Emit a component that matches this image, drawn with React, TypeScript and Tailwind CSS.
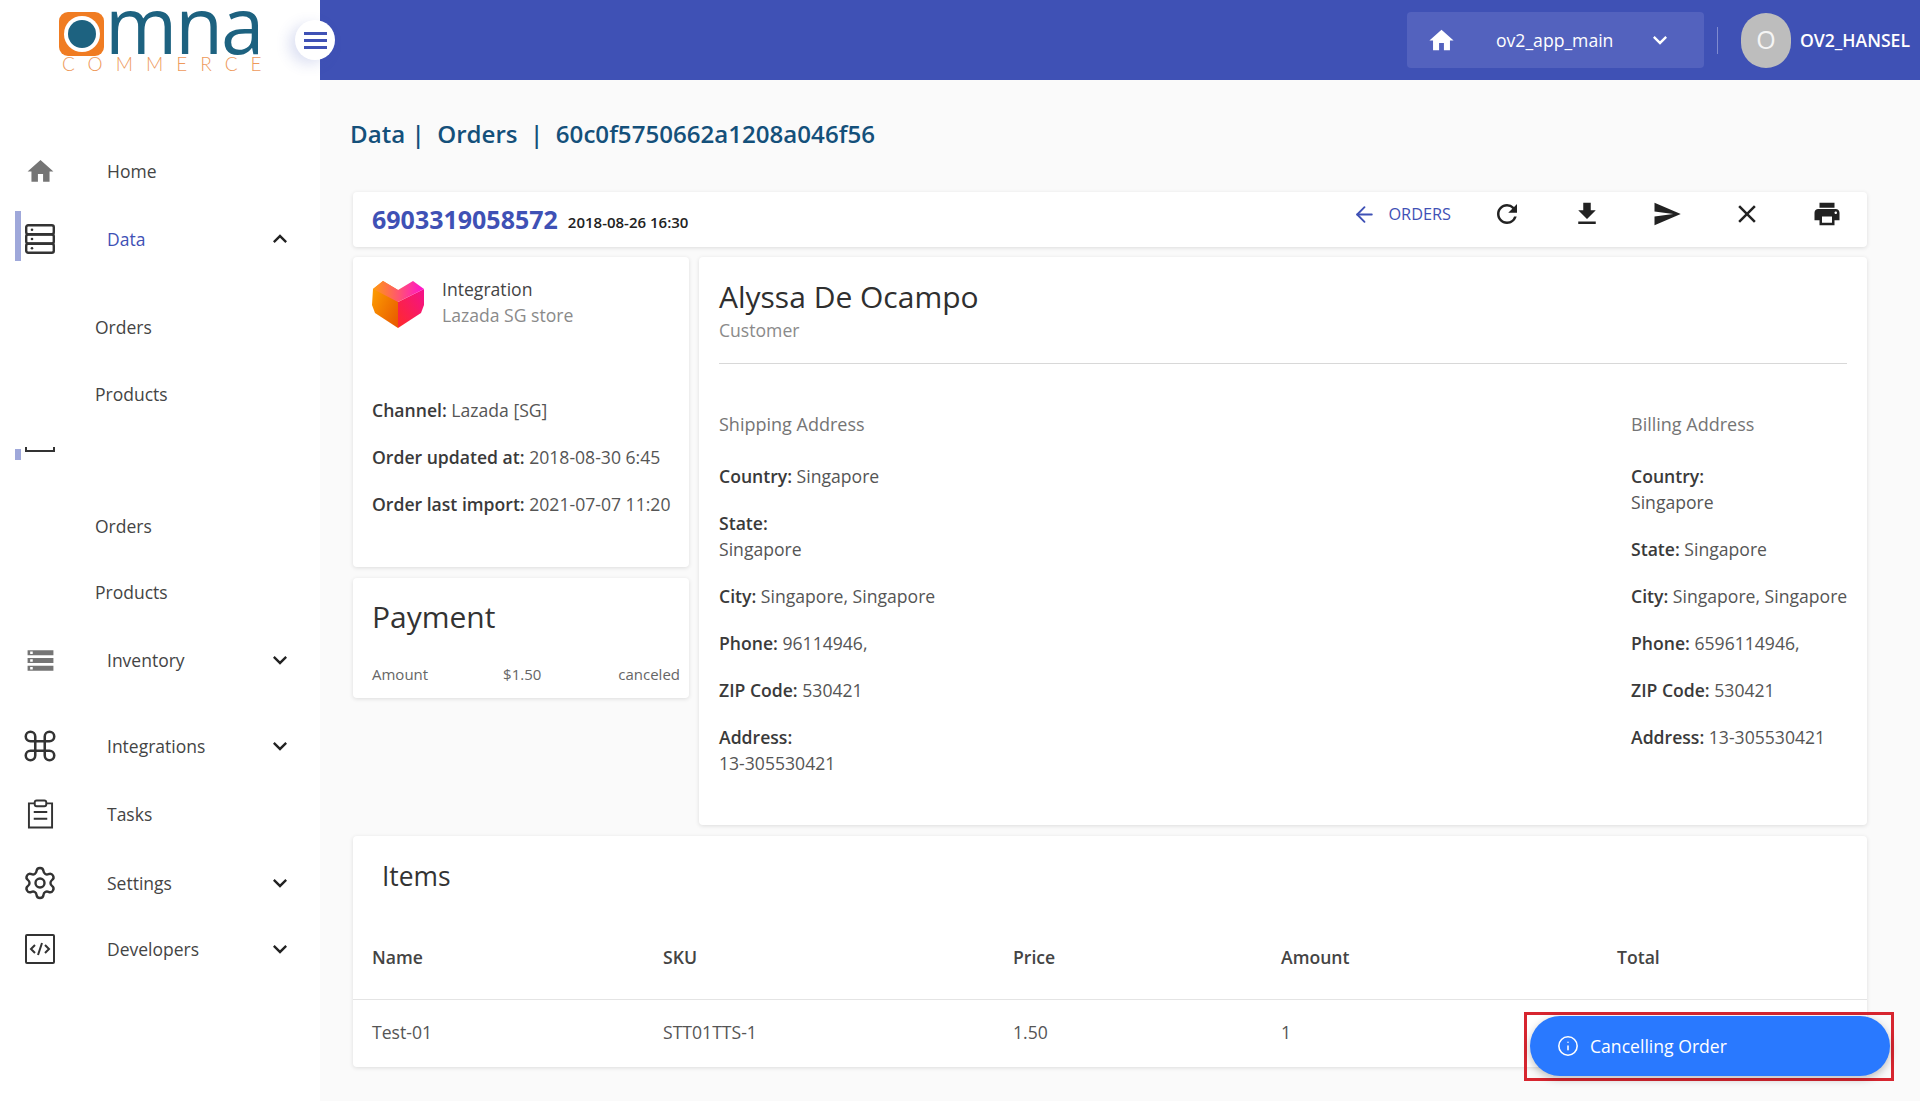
import React from "react";
import { MdHome, MdStorage, MdExpandMore, MdExpandLess, MdRefresh, MdFileDownload, MdSend, MdClose, MdPrint } from "react-icons/md";
import { ArrowLeft, Command, Settings, Info } from "lucide-react";

function ServerIcon({ className }: { className?: string }) {
  return (
    <svg viewBox="0 0 30 30" className={className} fill="none" stroke="#333" strokeWidth="2.4">
      <rect x="1.2" y="1.2" width="27.6" height="9" rx="2" />
      <rect x="1.2" y="10.5" width="27.6" height="9" rx="2" />
      <rect x="1.2" y="19.8" width="27.6" height="9" rx="2" />
      <circle cx="7" cy="5.7" r="1.3" fill="#333" stroke="none" />
      <circle cx="7" cy="15" r="1.3" fill="#333" stroke="none" />
      <circle cx="7" cy="24.3" r="1.3" fill="#333" stroke="none" />
    </svg>
  );
}

function TasksIcon({ className }: { className?: string }) {
  return (
    <svg viewBox="0 0 28 30" className={className} fill="none" stroke="#333" strokeWidth="2">
      <path d="M8 4H2v25h24V4h-6" />
      <rect x="8" y="1" width="12" height="6" rx="2" />
      <path d="M7 13h14M7 20h14" />
    </svg>
  );
}

function CodeIcon({ className }: { className?: string }) {
  return (
    <svg viewBox="0 0 30 30" className={className} fill="none" stroke="#333" strokeWidth="2">
      <rect x="1" y="1" width="28" height="28" rx="1" />
      <path d="M10 11l-4 4 4 4M20 11l4 4-4 4M17 9l-4 12" />
    </svg>
  );
}

function LazadaIcon() {
  return (
    <svg viewBox="0 0 52 48" className="w-[52px] h-[48px]">
      <defs>
        <linearGradient id="lz1" x1="0" y1="0" x2="1" y2="0.9">
          <stop offset="0" stopColor="#ffa400" />
          <stop offset="1" stopColor="#e85a00" />
        </linearGradient>
        <linearGradient id="lz2" x1="0" y1="0" x2="1" y2="0">
          <stop offset="0" stopColor="#ff9a10" />
          <stop offset="1" stopColor="#ff10d0" />
        </linearGradient>
        <linearGradient id="lz3" x1="0" y1="1" x2="1" y2="0">
          <stop offset="0" stopColor="#ff2a2a" />
          <stop offset="1" stopColor="#f4108c" />
        </linearGradient>
      </defs>
      <path d="M1 9L11 1l15 9v38L3 33 0 25z" fill="url(#lz1)" />
      <path d="M26 48l23-15 3-8V9L26 22z" fill="url(#lz3)" />
      <path d="M1 9l25 13L52 9 41 1 26 10 11 1z" fill="url(#lz2)" />
    </svg>
  );
}

function Logo() {
  return (
    <div className="w-[204px] flex flex-col">
      <div className="flex items-start h-[42px]">
        <div className="w-[45px] h-[44px] rounded-[9px] bg-[#f07c22] flex items-center justify-center shrink-0">
          <div className="w-[36px] h-[36px] rounded-full bg-white flex items-center justify-center">
            <div className="w-[28px] h-[28px] rounded-full bg-[#1d6280]" />
          </div>
        </div>
        <span className="text-[78px] leading-[40px] text-[#1d6280] tracking-[-2px] font-['Open_Sans',sans-serif] ml-[1px] -mt-[8px] font-normal whitespace-nowrap">
          mna
        </span>
      </div>
      <span className="ml-[3px] text-[19px] leading-[20px] text-[#ee9a5c] tracking-[13px] font-['Lato',sans-serif] font-light whitespace-nowrap">
        COMMERCE
      </span>
    </div>
  );
}

type NavProps = {
  icon?: React.ReactNode;
  label: string;
  chevron?: "up" | "down";
  active?: boolean;
  cls: string;
};

function NavRow({ icon, label, chevron, active, cls }: NavProps) {
  return (
    <div className={`relative flex items-center h-[40px] ${cls}`}>
      <div className="w-[80px] flex justify-center shrink-0">{icon}</div>
      <span className={`ml-[27px] text-[17.5px] flex-1 ${active ? "text-[#3f51b5]" : "text-[#444]"}`}>{label}</span>
      {chevron === "up" && <MdExpandLess className="w-[28px] h-[28px] text-[#222] mr-[26px]" />}
      {chevron === "down" && <MdExpandMore className="w-[28px] h-[28px] text-[#222] mr-[26px]" />}
    </div>
  );
}

function SubRow({ label, cls }: { label: string; cls: string }) {
  return <div className={`h-[40px] flex items-center pl-[95px] text-[17.5px] text-[#444] ${cls}`}>{label}</div>;
}

function Sidebar() {
  return (
    <aside className="relative w-[320px] shrink-0 bg-white h-full">
      <div className="pl-[59px] pt-[12px] h-[151px]">
        <Logo />
      </div>
      <button className="absolute left-[295px] top-[20px] w-[40px] h-[40px] rounded-full bg-white shadow-[-6px_4px_14px_rgba(63,81,181,0.18)] flex flex-col items-center justify-center gap-[4px] z-10">
        <span className="w-[23px] h-[3px] bg-[#3f51b5] block" />
        <span className="w-[23px] h-[3px] bg-[#3f51b5] block" />
        <span className="w-[23px] h-[3px] bg-[#3f51b5] block" />
      </button>
      <NavRow cls="" label="Home" icon={<MdHome className="w-[31px] h-[31px] text-[#757575]" />} />
      <div className="relative">
        <span className="absolute left-[15px] -top-[8px] w-[6px] h-[50px] bg-[#9fa8da]" />
        <NavRow cls="mt-[28px]" label="Data" active chevron="up" icon={<ServerIcon className="w-[30px] h-[30px]" />} />
      </div>
      <SubRow cls="mt-[48px]" label="Orders" />
      <SubRow cls="mt-[27px]" label="Products" />
      <div className="relative h-[12px] mt-[35px] mb-[-12px]">
        <span className="absolute left-[15px] top-[0px] w-[6px] h-[11px] bg-[#9fa8da]" />
        <span className="absolute left-[25px] top-[-2px] w-[30px] h-[5px] border-x-2 border-b-2 border-[#333]" />
      </div>
      <SubRow cls="mt-[57px]" label="Orders" />
      <SubRow cls="mt-[26px]" label="Products" />
      <NavRow cls="mt-[28px]" label="Inventory" chevron="down" icon={<MdStorage className="w-[31px] h-[31px] text-[#757575]" />} />
      <NavRow cls="mt-[46px]" label="Integrations" chevron="down" icon={<Command className="w-[38px] h-[38px] text-[#333]" strokeWidth={1.6} />} />
      <NavRow cls="mt-[28px]" label="Tasks" icon={<TasksIcon className="w-[27px] h-[30px]" />} />
      <NavRow cls="mt-[29px]" label="Settings" chevron="down" icon={<Settings className="w-[36px] h-[36px] text-[#333]" strokeWidth={1.6} />} />
      <NavRow cls="mt-[26px]" label="Developers" chevron="down" icon={<CodeIcon className="w-[30px] h-[30px]" />} />
    </aside>
  );
}

function Topbar() {
  return (
    <header className="h-[80px] bg-[#3f51b5] flex items-center justify-end shrink-0">
      <div className="w-[297px] h-[56px] rounded-[4px] bg-[#5362be] flex items-center text-white">
        <MdHome className="w-[29px] h-[29px] ml-[20px]" />
        <span className="ml-[40px] text-[17.6px] flex-1">ov2_app_main</span>
        <MdExpandMore className="w-[28px] h-[28px] mr-[30px]" />
      </div>
      <div className="w-px h-[27px] bg-[#7f8bd0] ml-[13px]" />
      <div className="ml-[23px] w-[50px] h-[55px] rounded-full bg-[#bdbdbd] text-[#f5f5f5] flex items-center justify-center text-[25px]">O</div>
      <span className="ml-[9px] mr-[10px] text-[17.6px] font-semibold text-white whitespace-nowrap">OV2_HANSEL</span>
    </header>
  );
}

function Field({ k, v, stack }: { k: string; v: string; stack?: boolean }) {
  return (
    <div className="text-[17.6px] leading-[26px] text-[#555] mt-[21px] whitespace-nowrap">
      <span className="font-semibold text-[#3a3a3a]">{k}</span>
      {stack ? <br /> : " "}
      {v}
    </div>
  );
}

const card = "bg-white rounded-[4px] shadow-[0_1px_4px_rgba(0,0,0,0.12)]";

function Toolbar() {
  const iconCls = "w-[30px] h-[30px] text-[#222]";
  return (
    <div className={`${card} h-[55px] flex items-center pl-[19px] pr-[25px]`}>
      <span className="text-[25px] font-bold text-[#3f51b5] leading-none -mt-[1px]">6903319058572</span>
      <span className="ml-[10px] mt-[6px] text-[15px] font-semibold text-[#222]">2018-08-26 16:30</span>
      <div className="ml-auto flex items-center -mt-[11px] h-[30px]">
        <ArrowLeft className="w-[25px] h-[25px] text-[#3f51b5]" strokeWidth={1.8} />
        <span className="ml-[11px] text-[16.3px] text-[#3f51b5]">ORDERS</span>
        <div className="ml-[41px] w-[30px] flex justify-center"><MdRefresh className={iconCls} /></div>
        <div className="ml-[50px] w-[30px] flex justify-center"><MdFileDownload className={iconCls} /></div>
        <div className="ml-[50px] w-[30px] flex justify-center"><MdSend className="w-[34px] h-[34px] text-[#222]" /></div>
        <div className="ml-[50px] w-[30px] flex justify-center"><MdClose className={iconCls} /></div>
        <div className="ml-[50px] w-[30px] flex justify-center"><MdPrint className={iconCls} /></div>
      </div>
    </div>
  );
}

function LeftColumn() {
  return (
    <div className="w-[336px] shrink-0 flex flex-col gap-[11px]">
      <div className={`${card} h-[310px] pl-[19px] pt-[19px]`}>
        <div className="flex items-start">
          <div className="pt-[4px]"><LazadaIcon /></div>
          <div className="ml-[18px] text-[17.6px] leading-[26px]">
            <div className="text-[#444]">Integration</div>
            <div className="text-[#8a8a8a]">Lazada SG store</div>
          </div>
        </div>
        <div className="mt-[69px] flex flex-col gap-[21px] text-[17.6px] leading-[26px] text-[#555] whitespace-nowrap">
          <div><span className="font-semibold text-[#3a3a3a]">Channel:</span> Lazada [SG]</div>
          <div><span className="font-semibold text-[#3a3a3a]">Order updated at:</span> 2018-08-30 6:45</div>
          <div><span className="font-semibold text-[#3a3a3a]">Order last import:</span> 2021-07-07 11:20</div>
        </div>
      </div>
      <div className={`${card} h-[120px] px-[19px] pt-[19px]`}>
        <div className="text-[30px] leading-[40px] text-[#333]">Payment</div>
        <div className="mt-[26px] flex justify-between text-[15px] text-[#666] mr-[-10px]">
          <span>Amount</span>
          <span className="ml-[-2px]">$1.50</span>
          <span>canceled</span>
        </div>
      </div>
    </div>
  );
}

function CustomerCard() {
  return (
    <div className={`${card} flex-1 h-[568px] px-[20px] pt-[20px]`}>
      <div className="text-[30px] leading-[40px] text-[#2f2f2f]">Alyssa De Ocampo</div>
      <div className="text-[17.6px] leading-[26px] text-[#8a8a8a]">Customer</div>
      <div className="h-px bg-[#d8d8d8] mt-[20px]" />
      <div className="flex justify-between mt-[47px]">
        <div>
          <div className="text-[18px] leading-[26px] text-[#757575] mb-[26px]">Shipping Address</div>
          <Field k="Country:" v="Singapore" />
          <Field k="State:" v="Singapore" stack />
          <Field k="City:" v="Singapore, Singapore" />
          <Field k="Phone:" v="96114946," />
          <Field k="ZIP Code:" v="530421" />
          <Field k="Address:" v="13-305530421" stack />
        </div>
        <div className="w-[216px]">
          <div className="text-[18px] leading-[26px] text-[#757575] mb-[26px]">Billing Address</div>
          <Field k="Country:" v="Singapore" stack />
          <Field k="State:" v="Singapore" />
          <Field k="City:" v="Singapore, Singapore" />
          <Field k="Phone:" v="6596114946," />
          <Field k="ZIP Code:" v="530421" />
          <Field k="Address:" v="13-305530421" />
        </div>
      </div>
    </div>
  );
}

function ItemsCard() {
  const cols = "grid grid-cols-[291px_350px_268px_336px_1fr] pl-[19px]";
  return (
    <div className={`${card} mt-[11px] h-[231px]`}>
      <div className="pl-[29px] pt-[20px] text-[26.4px] leading-[40px] text-[#333]">Items</div>
      <div className={`${cols} mt-[48px] h-[56px] text-[17.6px] font-semibold text-[#444] border-b border-[#e4e4e4]`}>
        <span>Name</span><span>SKU</span><span>Price</span><span>Amount</span><span>Total</span>
      </div>
      <div className={`${cols} h-[65px] items-center text-[17.6px] text-[#555]`}>
        <span>Test-01</span><span>STT01TTS-1</span><span>1.50</span><span>1</span><span />
      </div>
    </div>
  );
}

export default function App() {
  return (
    <div className="relative flex w-[1920px] h-[1101px] overflow-hidden bg-[#fafafa] font-['Open_Sans',sans-serif]">
      <Sidebar />
      <div className="flex-1 flex flex-col min-w-0">
        <Topbar />
        <main className="pl-[33px] pr-[53px] flex-1">
          <h1 className="ml-[-3px] mt-[36px] h-[36px] text-[24.1px] leading-[36px] font-semibold text-[#14507a] whitespace-pre">
            Data |  Orders  |  60c0f5750662a1208a046f56
          </h1>
          <div className="mt-[40px]"><Toolbar /></div>
          <div className="flex gap-[10px] mt-[10px]">
            <LeftColumn />
            <CustomerCard />
          </div>
          <ItemsCard />
        </main>
      </div>
      <div className="absolute left-[1524px] top-[1012px] w-[370px] h-[69px] border-[3px] border-[#d7252f] z-20 pl-[3px] pt-[1px]">
        <div className="w-[360px] h-[60px] rounded-full bg-[#2979ff] shadow-[0_3px_8px_rgba(0,0,0,0.25)] flex items-center pl-[27px] text-white">
          <Info className="w-[22px] h-[22px]" strokeWidth={1.7} />
          <span className="ml-[11px] text-[17.6px]">Cancelling Order</span>
        </div>
      </div>
    </div>
  );
}
